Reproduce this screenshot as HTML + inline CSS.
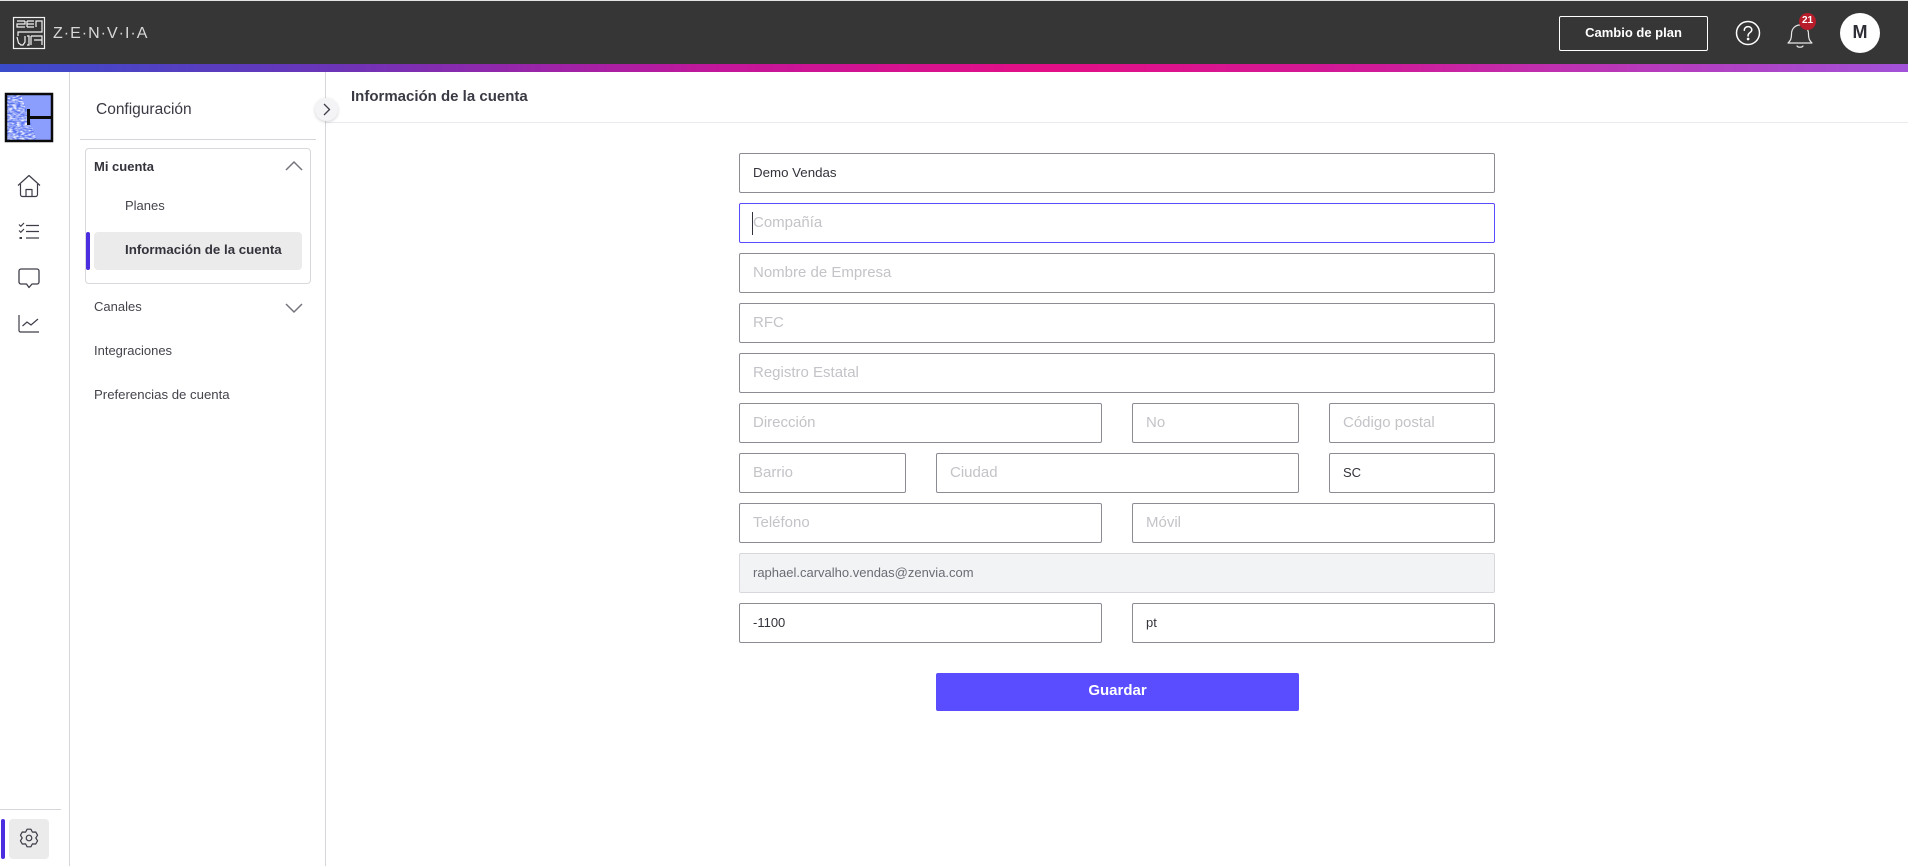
<!DOCTYPE html>
<html lang="es">
<head>
<meta charset="utf-8">
<title>Información de la cuenta</title>
<style>
html,body{margin:0;padding:0;background:#fff}
body{width:1908px;height:866px;position:relative;overflow:hidden;font-family:"Liberation Sans","Noto Sans CJK JP",sans-serif;color:#3a3a44}
.a{position:absolute}
.t{position:absolute;white-space:nowrap;line-height:20px;height:20px}
.f{position:absolute;box-sizing:border-box;height:40px;border:1px solid #8c8c94;border-radius:2px;background:#fff;padding:0 13px;line-height:37.500px;font-size:15px;color:#c3c3c8;white-space:nowrap}
.v{font-size:13px;color:#33333b;line-height:37px}
svg{position:absolute;overflow:visible}
</style>
</head>
<body>
<!-- header -->
<div class="a" style="left:0;top:0;width:1908px;height:1px;background:#e4e4e4"></div>
<div class="a" style="left:0;top:1px;width:1908px;height:63px;background:#363636"></div>
<div class="a" style="left:0;top:64px;width:1908px;height:8px;background:linear-gradient(90deg,#3a4ccb 0%,#6a35b8 17%,#c4169a 38%,#e30f86 55%,#d01a98 72%,#b838b8 85%,#a252d8 100%)"></div>

<svg style="left:0;top:0" width="60" height="64" viewBox="0 0 60 64" fill="none" stroke="#f2f2f2">
  <rect x="13.500" y="17.500" width="31" height="31" stroke-width="1.200"/>
  <path d="M17 21h8M25 21v3h-8v3h8M27 21h7M27 24h7M27 27h7M27 21v6M36 27v-6h6v11H18v4" stroke-width="1.200"/>
  <path d="M17 37l1.500 6 2.500 2h2l2-3v-6M27 36h2v9h-2M31 36h11v9M31 36v9M34 40h8" stroke-width="1.200"/>
</svg>
<div class="t" style="left:53px;top:24px;font-size:16px;color:#d8d8d8;letter-spacing:1px">Z·E·N·V·I·A</div>

<div class="a" style="left:1559px;top:16px;width:149px;height:35px;box-sizing:border-box;border:1px solid #fff;border-radius:2px;color:#fff;font-weight:bold;font-size:13px;text-align:center;line-height:31px">Cambio de plan</div>
<svg style="left:1735px;top:20px" width="26" height="26" viewBox="0 0 26 26" fill="none" stroke="#fff" stroke-width="1.500">
  <circle cx="13" cy="13" r="11.500"/>
  <path d="M9.300 10.200c0-2.200 1.700-3.600 3.800-3.600s3.700 1.400 3.700 3.300c0 2.600-3.700 2.700-3.700 5.400v.7" stroke-linecap="round"/>
  <circle cx="13.100" cy="19" r=".6" fill="#fff"/>
</svg>
<svg style="left:1786px;top:19px" width="28" height="30" viewBox="0 0 28 30" fill="none" stroke="#e8e8e8" stroke-width="1.200">
  <path d="M2 24c2-2 3.500-3.500 3.500-9 0-5 3.500-9 8.500-9s8.500 4 8.500 9c0 5.500 1.500 7 3.500 9z" stroke-linejoin="round"/>
  <path d="M11 27c1 1.600 5 1.600 6 0" stroke-linecap="round"/>
</svg>
<div class="a" style="left:1799px;top:13px;width:17px;height:17px;border-radius:50%;background:#b71c2a;color:#fff;font-weight:bold;font-size:10px;line-height:15px;text-align:center">21</div>
<div class="a" style="left:1840px;top:13px;width:40px;height:40px;border-radius:50%;background:#fff;color:#2f2f38;font-size:18px;font-weight:bold;line-height:39px;text-align:center">M</div>

<!-- left rail -->
<div class="a" style="left:69px;top:72px;width:1px;height:794px;background:#d6d6da"></div>
<div class="a" style="left:325px;top:72px;width:1px;height:794px;background:#d6d6da"></div>

<svg style="left:5px;top:93px" width="48" height="49" viewBox="0 0 48 49">
  <defs>
    <filter id="n" x="0" y="0" width="100%" height="100%">
      <feTurbulence type="fractalNoise" baseFrequency=".25 .6" numOctaves="2" seed="4"/>
      <feColorMatrix values="0 0 0 0 1  0 0 0 0 1  0 0 0 0 1  2.200 0 0 0 -.75"/>
    </filter>
    <clipPath id="c"><path d="M2 2h14l5 14 4 12 7 19H2z"/></clipPath>
  </defs>
  <rect width="48" height="49" fill="#0a0a0a"/>
  <rect x="2" y="2" width="44" height="45" fill="#8b9dfd"/>
  <g clip-path="url(#c)"><rect x="2" y="2" width="30" height="45" fill="#5a74f2"/><rect x="2" y="2" width="30" height="45" filter="url(#n)"/></g>
  <rect x="22" y="16" width="3" height="16" fill="#0a0a0a"/>
  <rect x="22" y="23" width="24" height="3" fill="#0a0a0a"/>
  <rect x="1" y="1" width="46" height="47" fill="none" stroke="#0a0a0a" stroke-width="2.500"/>
</svg>

<svg style="left:17px;top:174px" width="24" height="24" viewBox="0 0 24 24" fill="none" stroke="#3d3d48" stroke-width="1.200" stroke-linejoin="round">
  <path d="M1 11.500 12 1.500l11 10"/>
  <path d="M3.500 10v10.500a2 2 0 0 0 2 2h13a2 2 0 0 0 2-2V10"/>
  <path d="M9 22.500v-7h6v7"/>
</svg>
<svg style="left:18px;top:222px" width="22" height="19" viewBox="0 0 22 19" fill="none" stroke="#3d3d48" stroke-width="1.200">
  <path d="M8 3.500h13M8 9.500h13M8 16h13"/>
  <path d="M1 2.500l1.800 1.800L6 1M1 8.500l1.800 1.800L6 7"/>
  <path d="M1.500 16h2.500" stroke-width="2"/>
</svg>
<svg style="left:18px;top:268px" width="22" height="21" viewBox="0 0 22 21" fill="none" stroke="#3d3d48" stroke-width="1.300" stroke-linejoin="round">
  <path d="M3 1h16a2 2 0 0 1 2 2v11a2 2 0 0 1-2 2h-5l-3 3.500L8.500 16H3a2 2 0 0 1-2-2V3a2 2 0 0 1 2-2z"/>
</svg>
<svg style="left:18px;top:314px" width="22" height="19" viewBox="0 0 22 19" fill="none" stroke="#3d3d48" stroke-width="1.200">
  <path d="M1 1v15.500a1.500 1.500 0 0 0 1.500 1.500H21"/>
  <path d="M4.500 12l4.500-4 4 3 7-6"/>
</svg>

<div class="a" style="left:0;top:809px;width:61px;height:1px;background:#d6d6da"></div>
<div class="a" style="left:1px;top:819px;width:4px;height:40px;background:#4a2ee0;border-radius:2px"></div>
<div class="a" style="left:9px;top:819px;width:40px;height:40px;background:#ebebeb;border-radius:4px"></div>
<svg style="left:19px;top:828px" width="20" height="20" viewBox="0 0 20 20" fill="none" stroke="#3d3d48" stroke-width="1.200" stroke-linejoin="round">
  <path d="M8.130 1.200 11.870 1.200 13.400 4.110 16.690 3.980 18.560 7.220 16.800 10 18.560 12.780 16.690 16.020 13.400 15.890 11.870 18.800 8.130 18.800 6.600 15.890 3.310 16.020 1.440 12.780 3.200 10 1.440 7.220 3.310 3.980 6.600 4.110z"/>
  <circle cx="10" cy="10" r="2.800"/>
</svg>

<!-- settings panel -->
<div class="t" style="left:96px;top:100px;font-size:15.500px;color:#3a3a44">Configuración</div>
<div class="a" style="left:80px;top:139px;width:236px;height:1px;background:#d6d6da"></div>
<div class="a" style="left:85px;top:148px;width:226px;height:136px;box-sizing:border-box;border:1px solid #d8d8dc;border-radius:4px"></div>
<div class="t" style="left:94px;top:157px;font-size:13px;font-weight:bold;color:#33333b">Mi cuenta</div>
<svg style="left:285px;top:160px" width="18" height="11" viewBox="0 0 18 11" fill="none" stroke="#74747c" stroke-width="1.500"><path d="M1 10 9 2l8 8"/></svg>
<div class="t" style="left:125px;top:196px;font-size:13px;color:#44444c">Planes</div>
<div class="a" style="left:86px;top:232px;width:4px;height:38px;background:#4a2ee0;border-radius:2px"></div>
<div class="a" style="left:94px;top:232px;width:208px;height:38px;background:#ebebeb;border-radius:4px"></div>
<div class="t" style="left:125px;top:240px;font-size:13.300px;font-weight:bold;color:#33333b">Información de la cuenta</div>
<div class="t" style="left:94px;top:297px;font-size:13px;color:#44444c">Canales</div>
<svg style="left:285px;top:303px" width="18" height="11" viewBox="0 0 18 11" fill="none" stroke="#74747c" stroke-width="1.500"><path d="M1 1l8 8 8-8"/></svg>
<div class="t" style="left:94px;top:341px;font-size:13px;color:#44444c">Integraciones</div>
<div class="t" style="left:94px;top:385px;font-size:13.200px;color:#44444c">Preferencias de cuenta</div>

<!-- content header -->
<div class="a" style="left:326px;top:122px;width:1582px;height:1px;background:#ebebef"></div>
<div class="t" style="left:351px;top:87px;font-size:15px;font-weight:bold;color:#3a3a44">Información de la cuenta</div>
<div class="a" style="left:315px;top:98px;width:23px;height:23px;border-radius:50%;background:#f4f4f7;box-shadow:0 1px 3px rgba(0,0,0,.18)"></div>
<svg style="left:323px;top:103px" width="8" height="13" viewBox="0 0 8 13" fill="none" stroke="#3d3d48" stroke-width="1.300"><path d="M1 1l5.500 5.500L1 12"/></svg>

<!-- form -->
<div class="f v" style="left:739px;top:153px;width:756px;font-size:13.300px">Demo Vendas</div>
<div class="f" style="left:739px;top:203px;width:756px;border-color:#5a4dff">Compañía</div>
<div class="a" style="left:752px;top:212px;width:1px;height:23px;background:#33333b"></div>
<div class="f" style="left:739px;top:253px;width:756px">Nombre de Empresa</div>
<div class="f" style="left:739px;top:303px;width:756px">RFC</div>
<div class="f" style="left:739px;top:353px;width:756px">Registro Estatal</div>

<div class="f" style="left:739px;top:403px;width:363px">Dirección</div>
<div class="f" style="left:1132px;top:403px;width:167px">No</div>
<div class="f" style="left:1329px;top:403px;width:166px">Código postal</div>

<div class="f" style="left:739px;top:453px;width:167px">Barrio</div>
<div class="f" style="left:936px;top:453px;width:363px">Ciudad</div>
<div class="f v" style="left:1329px;top:453px;width:166px">SC</div>

<div class="f" style="left:739px;top:503px;width:363px">Teléfono</div>
<div class="f" style="left:1132px;top:503px;width:363px">Móvil</div>

<div class="f v" style="left:739px;top:553px;width:756px;background:#f2f3f5;border-color:#d8d8dc;color:#6b6b74">raphael.carvalho.vendas@zenvia.com</div>

<div class="f v" style="left:739px;top:603px;width:363px">-1100</div>
<div class="f v" style="left:1132px;top:603px;width:363px">pt</div>

<div class="a" style="left:936px;top:673px;width:363px;height:38px;background:#5a4dff;border-radius:2px;color:#fff;font-weight:bold;font-size:15px;text-align:center;line-height:36px">Guardar</div>
</body>
</html>
